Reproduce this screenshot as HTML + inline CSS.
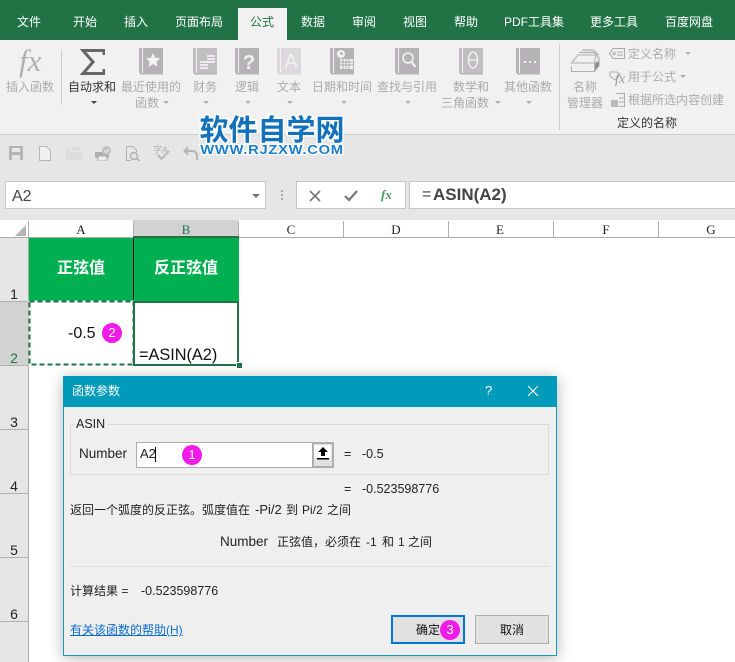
<!DOCTYPE html>
<html lang="zh"><head><meta charset="utf-8"><style>
html,body{margin:0;padding:0}
body{width:735px;height:662px;overflow:hidden;position:relative;background:#fff;font:12px/16px "Liberation Sans","Noto Sans CJK SC",sans-serif;color:#222}
div,span,svg{position:absolute}
.t{white-space:nowrap}
.c{white-space:nowrap;transform:translateX(-50%)}
.tab{top:14px;color:#fff}
.g{color:#ababab}
.car{width:0;height:0;border-left:3.5px solid transparent;border-right:3.5px solid transparent;border-top:3.5px solid #b0b0b0}
.col{top:223px;font:13px/14px "Liberation Serif",serif;color:#222;transform:translateX(-50%)}
.sep{top:221px;width:1px;height:16px;background:#b0b0b0}
.row{left:0;width:28px;height:1px;background:#b0b0b0}
.rn{left:8px;width:12px;text-align:center;font:14px/14px "Liberation Sans",sans-serif;color:#222}
.dot{width:20px;height:20px;border-radius:50%;background:#f01be8;color:#fff;text-align:center;font:13px/20px "Liberation Sans",sans-serif}
</style></head><body>

<div style="left:0;top:0;width:735px;height:40px;background:#217346"></div>
<div style="left:238px;top:8px;width:49px;height:32px;background:#f1f1f1"></div>
<div class="c tab" style="left:29px">文件</div>
<div class="c tab" style="left:85px">开始</div>
<div class="c tab" style="left:136px">插入</div>
<div class="c tab" style="left:199px">页面布局</div>
<div class="c tab" style="left:262px;color:#217346">公式</div>
<div class="c tab" style="left:313px">数据</div>
<div class="c tab" style="left:364px">审阅</div>
<div class="c tab" style="left:415px">视图</div>
<div class="c tab" style="left:466px">帮助</div>
<div class="c tab" style="left:534px">PDF工具集</div>
<div class="c tab" style="left:614px">更多工具</div>
<div class="c tab" style="left:689px">百度网盘</div>

<div style="left:0;top:40px;width:735px;height:94px;background:#f1f1f1"></div>
<div style="left:0;top:134px;width:735px;height:86px;background:#e6e6e6;border-top:1px solid #cfcfcf;box-sizing:border-box"></div>
<div style="left:61px;top:50px;width:1px;height:55px;background:#cfcfcf"></div>
<div style="left:559px;top:44px;width:1px;height:86px;background:#cfcfcf"></div>

<div class="t" style="left:19px;top:43px;font:italic 31px/36px 'Liberation Serif',serif;color:#b0b0b0">fx</div>
<svg style="left:80px;top:48px" width="25" height="28" viewBox="0 0 25 28"><path d="M24 7V2.500H3L13 14 3 25.500H24V21" fill="none" stroke="#666" stroke-width="3"/></svg>

<svg style="left:139px;top:48px" width="24" height="28"><rect x="0" y="0" width="24" height="25" fill="#b5b3b5"/><rect x="3" y="0" width="1" height="25" fill="#f1f1f1"/><rect x="1" y="25" width="23" height="1.5" fill="#b5b3b5"/><path d="M14 5l2.200 4.800 5 .5-3.800 3.400 1.100 5-4.500-2.700-4.500 2.700 1.100-5L7 10.300l5-.5z" fill="#f3f3f3"/></svg>
<svg style="left:193px;top:48px" width="24" height="28"><rect x="0" y="0" width="24" height="25" fill="#c0bec0"/><rect x="3" y="0" width="1" height="25" fill="#f1f1f1"/><rect x="1" y="25" width="23" height="1.5" fill="#b5b3b5"/><path d="M14 7h8v2h-8zM14 10h8v2h-8zM14 13h8v2h-8zM7 13h8v2H7zM7 16h8v2H7zM7 19h8v2H7z" fill="#ececec"/></svg>
<svg style="left:235px;top:48px" width="24" height="28"><rect x="0" y="0" width="24" height="25" fill="#b5b3b5"/><rect x="3" y="0" width="1" height="25" fill="#f1f1f1"/><rect x="1" y="25" width="23" height="1.5" fill="#b5b3b5"/><text x="14" y="21" text-anchor="middle" font-family="Liberation Sans" font-weight="700" font-size="20" fill="#f3f3f3">?</text></svg>
<svg style="left:277px;top:48px" width="24" height="28"><rect x="0" y="0" width="24" height="25" fill="#dcd8dc"/><rect x="3" y="0" width="1" height="25" fill="#f1f1f1"/><rect x="1" y="25" width="23" height="1.5" fill="#dcd8dc"/><text x="14" y="20" text-anchor="middle" font-family="Liberation Sans" font-size="20" fill="#f3f3f3">A</text></svg>
<svg style="left:330px;top:48px" width="24" height="28"><rect x="0" y="0" width="24" height="25" fill="#b5b3b5"/><rect x="3" y="0" width="1" height="25" fill="#f1f1f1"/><rect x="1" y="25" width="23" height="1.5" fill="#b5b3b5"/><circle cx="11" cy="6" r="4" fill="#f3f3f3"/><path d="M11 4v2h2" stroke="#888" fill="none"/><path d="M10 11h13v10H10z" fill="#f3f3f3"/><path d="M10 14h13M10 17h13M13 11v10M16 11v10M19 11v10" stroke="#aaa"/></svg>
<svg style="left:395px;top:48px" width="24" height="28"><rect x="0" y="0" width="24" height="25" fill="#b5b3b5"/><rect x="3" y="0" width="1" height="25" fill="#f1f1f1"/><rect x="1" y="25" width="23" height="1.5" fill="#b5b3b5"/><circle cx="13" cy="10" r="5" fill="none" stroke="#f3f3f3" stroke-width="1.500"/><path d="M16.500 14l4 5" stroke="#f3f3f3" stroke-width="2"/></svg>
<svg style="left:459px;top:48px" width="24" height="28"><rect x="0" y="0" width="24" height="25" fill="#c0bec0"/><rect x="3" y="0" width="1" height="25" fill="#f1f1f1"/><rect x="1" y="25" width="23" height="1.5" fill="#b5b3b5"/><ellipse cx="14" cy="12" rx="4.500" ry="8" fill="none" stroke="#f3f3f3" stroke-width="1.400"/><path d="M10 12h8" stroke="#f3f3f3" stroke-width="1.400"/></svg>
<svg style="left:516px;top:48px" width="24" height="28"><rect x="0" y="0" width="24" height="25" fill="#b5b3b5"/><rect x="3" y="0" width="1" height="25" fill="#f1f1f1"/><rect x="1" y="25" width="23" height="1.5" fill="#b5b3b5"/><path d="M8 13h2v2H8zM13 13h2v2h-2zM18 13h2v2h-2z" fill="#f3f3f3"/></svg>

<div class="c g" style="left:30px;top:79px">插入函数</div>
<div class="c" style="left:92px;top:79px;color:#333">自动求和</div>
<div class="c g" style="left:151px;top:79px">最近使用的</div>
<div class="c g" style="left:147px;top:95px">函数</div>
<div class="c g" style="left:205px;top:79px">财务</div>
<div class="c g" style="left:247px;top:79px">逻辑</div>
<div class="c g" style="left:289px;top:79px">文本</div>
<div class="c g" style="left:342px;top:79px">日期和时间</div>
<div class="c g" style="left:407px;top:79px">查找与引用</div>
<div class="c g" style="left:471px;top:79px">数学和</div>
<div class="c g" style="left:465px;top:95px">三角函数</div>
<div class="c g" style="left:528px;top:79px">其他函数</div>
<div class="car" style="left:91px;top:101px;border-top-color:#444"></div>
<div class="car" style="left:163px;top:101px"></div>
<div class="car" style="left:203px;top:101px"></div>
<div class="car" style="left:245px;top:101px"></div>
<div class="car" style="left:287px;top:101px"></div>
<div class="car" style="left:341px;top:101px"></div>
<div class="car" style="left:405px;top:101px"></div>
<div class="car" style="left:495px;top:101px"></div>
<div class="car" style="left:526px;top:101px"></div>

<svg style="left:570px;top:49px" width="30" height="24" fill="none" stroke="#b0b0b0"><path d="M1.500 17V22.500H24.500V14H1.500L8 6H26L24.500 14"/><path d="M9 3.500H24L29 9V16L25 21" stroke-width="1.200"/><path d="M12 1H23L29 6" stroke-width="1.200"/><path d="M25 22l4-5V12l-4 2z" fill="#888"/></svg>
<div class="c g" style="left:585px;top:79px">名称</div>
<div class="c g" style="left:585px;top:95px">管理器</div>
<svg style="left:609px;top:47px" width="17" height="14" fill="none" stroke="#aaa"><path d="M4 1.500H15.500V11.500H4L.5 6.500z"/><circle cx="5" cy="6.500" r="1.300"/><path d="M8 5h6M8 8h6"/></svg>
<div class="t g" style="left:628px;top:46px">定义名称</div>
<div class="car" style="left:685px;top:52px"></div>
<svg style="left:609px;top:70px" width="18" height="16" fill="none" stroke="#aaa"><path d="M1 2H8L11 5 6 10 1 6z"/></svg>
<div class="t" style="left:615px;top:72px;font:italic 14px/16px 'Liberation Serif',serif;color:#9a9a9a">fx</div>
<div class="t g" style="left:628px;top:69px">用于公式</div>
<div class="car" style="left:680px;top:75px"></div>
<svg style="left:610px;top:92px" width="16" height="16"><path d="M1 8h7v7H1z" fill="#bbb"/><path d="M6.500 1.500h8v13h-6" fill="none" stroke="#aaa"/><path d="M9 6h5M9 10h5" stroke="#aaa"/></svg>
<div class="t g" style="left:628px;top:92px">根据所选内容创建</div>
<div class="c" style="left:647px;top:115px;color:#333">定义的名称</div>

<svg style="left:9px;top:146px" width="15" height="15"><path d="M0 0H14V14H0z" fill="#b5b5b5"/><path d="M3 2h8v4H3z" fill="#e6e6e6"/><path d="M3 9h8v5H3z" fill="#e6e6e6"/></svg>
<svg style="left:39px;top:146px" width="12" height="15" fill="#f0f0f0" stroke="#b5b5b5"><path d="M.5.500H7.500L11.500 4.500V14.500H.5z"/></svg>
<svg style="left:66px;top:147px" width="17" height="13" fill="#dcdcdc"><path d="M0 13V2H6L8 0H15V3H5zM1 13 5 5H17L15 13z"/></svg>
<svg style="left:95px;top:146px" width="17" height="15"><path d="M0 6H14V12H0z" fill="#b0b0b0"/><path d="M3 10h9v5H3z" fill="#eee" stroke="#aaa"/><circle cx="11.500" cy="4.500" r="4.500" fill="#c0c0c0"/><path d="M9 4.500l2 2 3-3.500" stroke="#eee" fill="none"/></svg>
<svg style="left:126px;top:146px" width="15" height="15" fill="none" stroke="#b0b0b0"><path d="M.5.500H7L10.500 4V6M.5.500V14.500H5"/><circle cx="8" cy="10" r="3.500" stroke-width="1.400"/><path d="M10.500 12.500l3.500 2.500" stroke-width="1.600"/></svg>
<div class="t" style="left:153px;top:144px;font-size:9px;line-height:12px;color:#b0b0b0">字A</div>
<svg style="left:157px;top:150px" width="13" height="11" fill="none" stroke="#b5b5b5" stroke-width="2"><path d="M1 5l3.500 4L12 1"/></svg>
<svg style="left:183px;top:146px" width="15" height="15" fill="none" stroke="#b5b5b5" stroke-width="2"><path d="M5 1.500 1.500 5 5 8.500M2 5H9C12 5 14 7 14 10V14"/></svg>

<div class="c" style="left:272px;top:113px;font:bold 29px/36px 'Liberation Sans','Noto Sans CJK SC',sans-serif;color:#1271bb;-webkit-text-stroke:3px #fff;paint-order:stroke fill">软件自学网</div>
<div class="t" style="left:272px;top:143px;font:bold 12.5px/14px 'Liberation Sans',sans-serif;letter-spacing:.6px;color:#1a7fd0;-webkit-text-stroke:2.5px #fff;paint-order:stroke fill;transform:translateX(-50%) scaleX(1.18)">WWW.RJZXW.COM</div>

<div style="left:5px;top:181px;width:261px;height:28px;background:#fff;border:1px solid #c6c6c6;box-sizing:border-box"></div>
<div class="t" style="left:12px;top:188px;font-size:16px;line-height:18px;color:#444">A2</div>
<div class="car" style="left:252px;top:194px;border-top-color:#777;border-left-width:4px;border-right-width:4px;border-top-width:4px"></div>
<div style="left:281px;top:190px;width:2px;height:2px;background:#aaa;box-shadow:0 4px #aaa,0 8px #aaa"></div>
<div style="left:296px;top:181px;width:110px;height:28px;background:#fff;border:1px solid #c6c6c6;box-sizing:border-box"></div>
<svg style="left:309px;top:190px" width="12" height="12" stroke="#777" stroke-width="1.600"><path d="M1 1l10 10M11 1 1 11"/></svg>
<svg style="left:344px;top:190px" width="14" height="12" stroke="#777" stroke-width="2.200" fill="none"><path d="M1 6l4 4 8-9"/></svg>
<div class="t" style="left:381px;top:187px;font:italic bold 13px/16px 'Liberation Serif',serif;color:#4b9a6a">fx</div>
<div style="left:409px;top:181px;width:326px;height:28px;background:#fff;border:1px solid #c6c6c6;border-right:0;box-sizing:border-box"></div>
<div class="t" style="left:422px;top:186px;font-size:16px;line-height:18px;color:#444">=</div>
<div class="t" style="left:433px;top:186px;font-size:17px;line-height:18px;font-weight:700;color:#444">ASIN(A2)</div>

<div style="left:133px;top:220px;width:105px;height:17px;background:#d2d2d2"></div>
<div style="left:0;top:237px;width:735px;height:1px;background:#ababab"></div>
<svg style="left:15px;top:225px" width="11" height="11"><path d="M11 0V11H0z" fill="#b5b5b5"/></svg>
<div class="sep" style="left:28px"></div><div class="sep" style="left:133px"></div><div class="sep" style="left:238px"></div><div class="sep" style="left:343px"></div><div class="sep" style="left:448px"></div><div class="sep" style="left:553px"></div><div class="sep" style="left:658px"></div>
<div class="col" style="left:81px">A</div><div class="col" style="left:186px;color:#217346">B</div><div class="col" style="left:291px">C</div><div class="col" style="left:396px">D</div><div class="col" style="left:500px">E</div><div class="col" style="left:606px">F</div><div class="col" style="left:711px">G</div>

<div style="left:0;top:238px;width:28px;height:424px;background:#e6e6e6"></div>
<div style="left:0;top:301px;width:28px;height:64px;background:#d2d2d2"></div>
<div style="left:28px;top:238px;width:1px;height:424px;background:#ababab"></div>
<div class="row" style="top:301px"></div><div class="row" style="top:365px"></div><div class="row" style="top:429px"></div><div class="row" style="top:493px"></div><div class="row" style="top:557px"></div><div class="row" style="top:621px"></div>
<div class="rn" style="top:287px">1</div><div class="rn" style="top:351px;color:#217346">2</div><div class="rn" style="top:415px">3</div><div class="rn" style="top:479px">4</div><div class="rn" style="top:543px">5</div><div class="rn" style="top:607px">6</div>

<div style="left:29px;top:238px;width:210px;height:63px;background:#00b050"></div>
<div style="left:133px;top:238px;width:1px;height:63px;background:#000"></div>
<div style="left:133px;top:236px;width:106px;height:2px;background:#217346"></div>
<div class="c" style="left:81px;top:259px;font-size:16px;line-height:20px;font-weight:700;color:#fff">正弦值</div>
<div class="c" style="left:186px;top:259px;font-size:16px;line-height:20px;font-weight:700;color:#fff">反正弦值</div>

<svg style="left:28px;top:300px" width="108" height="67"><rect x="1.500" y="1.500" width="104" height="63" fill="none" stroke="#fff" stroke-width="2"/><rect x="1.500" y="1.500" width="104" height="63" fill="none" stroke="#217346" stroke-width="2" stroke-dasharray="5 3"/></svg>
<div style="left:133px;top:301px;width:106px;height:65px;border:2px solid #217346;box-sizing:border-box"></div>
<div style="left:236px;top:362px;width:5px;height:5px;background:#217346;border:1px solid #fff;box-sizing:content-box"></div>
<div class="t" style="left:68px;top:325px;font-size:16px;line-height:18px;color:#111">-0.5</div>
<div class="dot" style="left:102px;top:323px">2</div>
<div class="t" style="left:139px;top:346px;font-size:16.300px;line-height:18px;color:#111">=ASIN(A2)</div>

<div style="left:63px;top:376px;width:494px;height:280px;background:#efefef;border:1px solid #0f9fc2;box-sizing:border-box;box-shadow:0 2px 14px rgba(0,0,0,.3)"></div>
<div style="left:63px;top:376px;width:494px;height:31px;background:#009aba"></div>
<div class="t" style="left:72px;top:383px;color:#fff">函数参数</div>
<div class="t" style="left:485px;top:383px;color:#fff;font-size:13px">?</div>
<svg style="left:527px;top:385px" width="12" height="12" stroke="#fff" stroke-width="1.100"><path d="M1 1l10 10M11 1 1 11"/></svg>

<div style="left:70px;top:424px;width:479px;height:51px;border:1px solid #dadada;box-sizing:border-box"></div>
<div class="t" style="left:74px;top:416px;padding:0 2px;background:#efefef;font-size:12.500px">ASIN</div>
<div class="t" style="left:79px;top:446px;font-size:13.500px;color:#222">Number</div>
<div style="left:136px;top:442px;width:198px;height:26px;background:#fff;border:1px solid #adadad;box-sizing:border-box"></div>
<div style="left:312px;top:442px;width:22px;height:26px;background:#e1e1e1;border:2px solid #adadad;box-sizing:border-box"></div>
<div style="left:314px;top:445px;width:17px;height:19px;background:linear-gradient(#fff 70%,#e1e1e1 70%)"></div>
<svg style="left:316px;top:446px" width="14" height="14"><path d="M7 1 2 6H5V10H9V6H12zM1 12H13V13.500H1z" fill="#000"/></svg>
<div class="t" style="left:140px;top:446px;font-size:13px;color:#222">A2</div>
<div style="left:155px;top:447px;width:1px;height:15px;background:#000"></div>
<div class="dot" style="left:182px;top:445px">1</div>
<div class="t" style="left:344px;top:446px;font-size:12.500px">=</div>
<div class="t" style="left:362px;top:446px;font-size:12.500px">-0.5</div>
<div class="t" style="left:344px;top:481px;font-size:12.500px">=</div>
<div class="t" style="left:362px;top:481px;font-size:12.500px">-0.523598776</div>

<div class="t" style="left:70px;top:502px">返回一个弧度的反正弦。弧度值在</div>
<div class="t" style="left:255px;top:502px;font-size:13px">-Pi/2</div>
<div class="t" style="left:286px;top:502px">到</div>
<div class="t" style="left:302px;top:502px">Pi/2</div>
<div class="t" style="left:327px;top:502px">之间</div>

<div class="t" style="left:220px;top:534px;font-size:13.500px">Number</div>
<div class="t" style="left:277px;top:534px">正弦值，必须在</div>
<div class="t" style="left:366px;top:534px">-1</div>
<div class="t" style="left:382px;top:534px">和</div>
<div class="t" style="left:398px;top:534px">1</div>
<div class="t" style="left:408px;top:534px">之间</div>

<div style="left:70px;top:566px;width:480px;height:1px;background:#dcdcdc"></div>
<div class="t" style="left:70px;top:583px">计算结果 =</div>
<div class="t" style="left:141px;top:583px;font-size:12.500px">-0.523598776</div>
<div class="t" style="left:70px;top:622px;color:#0a6cce;text-decoration:underline">有关该函数的帮助(H)</div>

<div style="left:391px;top:615px;width:74px;height:29px;background:#e1e1e1;border:2px solid #0078d7;box-sizing:border-box"></div>
<div class="t" style="left:416px;top:622px;color:#111">确定</div>
<div class="dot" style="left:440px;top:619.500px">3</div>
<div style="left:475px;top:615px;width:74px;height:29px;background:#e1e1e1;border:1px solid #adadad;box-sizing:border-box"></div>
<div class="c" style="left:512px;top:622px;color:#111">取消</div>

</body></html>
